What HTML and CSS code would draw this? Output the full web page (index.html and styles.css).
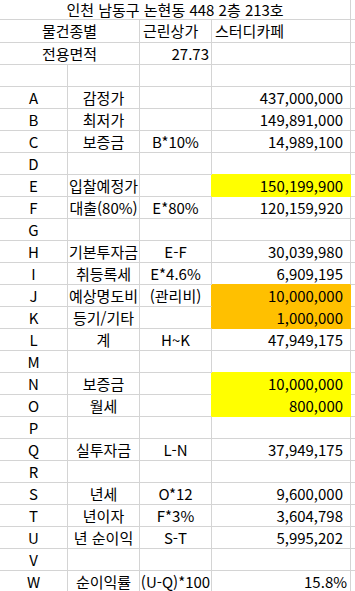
FILE: index.html
```html
<!DOCTYPE html>
<html lang="ko">
<head>
<meta charset="utf-8">
<link rel="stylesheet" href="styles.css">
</head>
<body>
<table class="sheet">
  <colgroup>
    <col class="w-a"><col class="w-b"><col class="w-c"><col class="w-d"><col class="w-x">
  </colgroup>
  <tr class="r-title"><td colspan="4" class="ctr">인천 남동구 논현동 448 2층 213호</td><td class="x"></td></tr>
  <tr class="r-two"><td colspan="2" class="ctr">물건종별</td><td class="lft">근린상가</td><td class="lft">스터디카페</td><td class="x"></td></tr>
  <tr><td colspan="2" class="ctr">전용면적</td><td class="num">27.73</td><td></td><td class="x"></td></tr>
  <tr><td></td><td></td><td></td><td></td><td class="x"></td></tr>
  <tr><td class="ctr">A</td><td class="ctr"><div class="sp">감정가</div></td><td class="ctr"></td><td class="val">437,000,000</td><td class="x"></td></tr>
  <tr><td class="ctr">B</td><td class="ctr"><div class="sp">최저가</div></td><td class="ctr"></td><td class="val">149,891,000</td><td class="x"></td></tr>
  <tr><td class="ctr">C</td><td class="ctr"><div class="sp">보증금</div></td><td class="ctr"><div class="sp">B*10%</div></td><td class="val">14,989,100</td><td class="x"></td></tr>
  <tr><td class="ctr">D</td><td></td><td></td><td class="yb"></td><td class="x"></td></tr>
  <tr><td class="ctr">E</td><td class="ctr"><div class="sp">입찰예정가</div></td><td class="yr"></td><td class="val y">150,199,900</td><td class="x"></td></tr>
  <tr><td class="ctr">F</td><td class="ctr"><div class="sp">대출(80%)</div></td><td class="ctr"><div class="sp">E*80%</div></td><td class="val">120,159,920</td><td class="x"></td></tr>
  <tr><td class="ctr">G</td><td></td><td></td><td></td><td class="x"></td></tr>
  <tr><td class="ctr">H</td><td class="ctr"><div class="sp">기본투자금</div></td><td class="ctr"><div class="sp">E-F</div></td><td class="val">30,039,980</td><td class="x"></td></tr>
  <tr><td class="ctr">I</td><td class="ctr"><div class="sp">취등록세</div></td><td class="ctr"><div class="sp">E*4.6%</div></td><td class="val ob">6,909,195</td><td class="x"></td></tr>
  <tr><td class="ctr">J</td><td class="ctr"><div class="sp">예상명도비</div></td><td class="ctr or"><div class="sp">(관리비)</div></td><td class="val o">10,000,000</td><td class="x"></td></tr>
  <tr><td class="ctr">K</td><td class="ctr"><div class="sp">등기/기타</div></td><td class="or"></td><td class="val o">1,000,000</td><td class="x"></td></tr>
  <tr><td class="ctr">L</td><td class="ctr"><div class="sp">계</div></td><td class="ctr"><div class="sp">H~K</div></td><td class="val">47,949,175</td><td class="x"></td></tr>
  <tr><td class="ctr">M</td><td></td><td></td><td class="yb"></td><td class="x"></td></tr>
  <tr><td class="ctr">N</td><td class="ctr"><div class="sp">보증금</div></td><td class="yr"></td><td class="val y">10,000,000</td><td class="x"></td></tr>
  <tr><td class="ctr">O</td><td class="ctr"><div class="sp">월세</div></td><td class="yr"></td><td class="val y">800,000</td><td class="x"></td></tr>
  <tr><td class="ctr">P</td><td></td><td></td><td></td><td class="x"></td></tr>
  <tr><td class="ctr">Q</td><td class="ctr"><div class="sp">실투자금</div></td><td class="ctr"><div class="sp">L-N</div></td><td class="val">37,949,175</td><td class="x"></td></tr>
  <tr><td class="ctr">R</td><td></td><td></td><td></td><td class="x"></td></tr>
  <tr><td class="ctr">S</td><td class="ctr"><div class="sp">년세</div></td><td class="ctr"><div class="sp">O*12</div></td><td class="val">9,600,000</td><td class="x"></td></tr>
  <tr><td class="ctr">T</td><td class="ctr"><div class="sp">년이자</div></td><td class="ctr"><div class="sp">F*3%</div></td><td class="val">3,604,798</td><td class="x"></td></tr>
  <tr><td class="ctr">U</td><td class="ctr"><div class="sp">년 순이익</div></td><td class="ctr"><div class="sp">S-T</div></td><td class="val">5,995,202</td><td class="x"></td></tr>
  <tr><td class="ctr">V</td><td></td><td></td><td></td><td class="x"></td></tr>
  <tr><td class="ctr">W</td><td class="ctr"><div class="sp">순이익률</div></td><td class="ctr"><div class="sp">(U-Q)*100</div></td><td class="pct">15.8%</td><td class="x"></td></tr>
</table>
</body>
</html>
```
FILE: styles.css
```css
html, body {
  margin: 0;
  padding: 0;
  background: #ffffff;
}
body {
  font-family: "Noto Sans CJK KR", "Noto Sans", sans-serif;
  font-size: 15px;
  color: #000000;
  overflow: hidden;
}
.sheet {
  border-collapse: separate;
  border-spacing: 0;
  table-layout: fixed;
  width: 355px;
}
.w-a { width: 68px; }
.w-b { width: 72px; }
.w-c { width: 72px; }
.w-d { width: 139px; }
.w-x { width: 4px; }
.sheet td {
  height: 21px;
  padding: 0;
  border-right: 1px solid #d4d4d4;
  border-bottom: 1px solid #d4d4d4;
  white-space: nowrap;
  vertical-align: middle;
  line-height: 21px;
  box-sizing: content-box;
}
.sheet td.x {
  border-right: none;
}
.r-title td { height: 19px; line-height: 19px; }
.r-two td { height: 22px; line-height: 22px; }
.ctr { text-align: center; }
.lft { text-align: left; padding-left: 3px !important; }
.num { text-align: right; padding-right: 2px !important; }
.val { text-align: right; padding-right: 7px !important; }
.pct { text-align: right; padding-right: 3px !important; }
.sp {
  margin: 0 -10px;
  text-align: center;
  white-space: nowrap;
}
.y { background: #ffff00; border-color: #ffff00 !important; }
.o { background: #ffc000; border-color: #ffc000 !important; }
.yr { border-right-color: #ffff00 !important; }
.yb { border-bottom-color: #ffff00 !important; }
.or { border-right-color: #ffc000 !important; }
.ob { border-bottom-color: #ffc000 !important; }
```
